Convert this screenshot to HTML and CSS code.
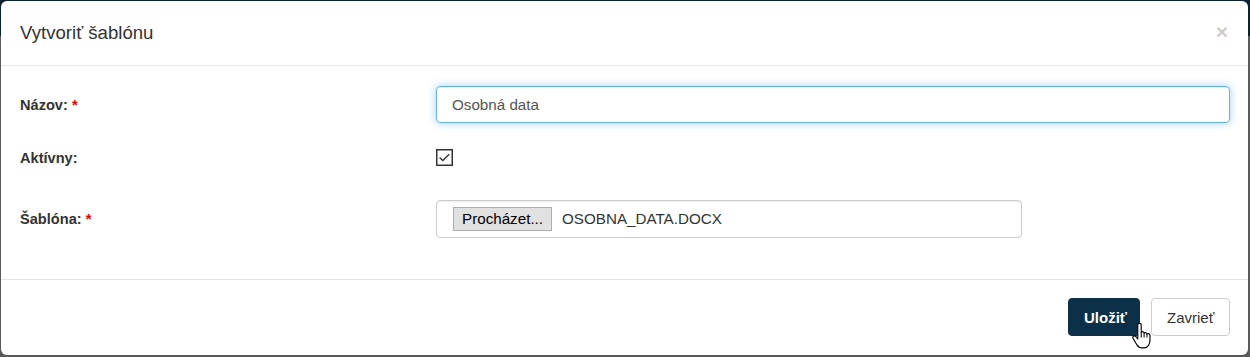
FILE: index.html
```html
<!DOCTYPE html>
<html lang="sk">
<head>
<meta charset="utf-8">
<title>Vytvoriť šablónu</title>
<link rel="stylesheet" href="styles.css">
</head>
<body>
<div class="modal">
  <div class="modal-header">
    <h4 class="modal-title">Vytvoriť šablónu</h4>
    <span class="close">×</span>
  </div>
  <div class="modal-body">
    <div class="row row-name">
      <label class="lbl">Názov: <span class="req">*</span></label>
      <div class="ctl"><div class="input focus">Osobná data</div></div>
    </div>
    <div class="row row-active">
      <label class="lbl">Aktívny:</label>
      <div class="ctl">
        <svg class="check" width="17" height="17" viewBox="0 0 17 17"><rect x="0.75" y="0.75" width="15.5" height="15.5" fill="#fff" stroke="#333" stroke-width="1.5"/><polyline points="3.6,8.6 6.8,11.6 13.2,5.2" fill="none" stroke="#333" stroke-width="1.4"/></svg>
      </div>
    </div>
    <div class="row row-file">
      <label class="lbl">Šablóna: <span class="req">*</span></label>
      <div class="ctl"><div class="input file"><span class="browse">Procházet...</span><span class="fname">OSOBNA_DATA.DOCX</span></div></div>
    </div>
  </div>
  <div class="modal-footer">
    <button class="btn btn-primary">Uložiť</button>
    <button class="btn btn-default">Zavrieť</button>
  </div>
  <svg class="cursor" width="19" height="26" viewBox="0 0 16.5 22.5"><path d="M5 1.6C5 .8 5.6.2 6.5.2S8 .8 8 1.6V8.2C8.3 7.6 9 7.4 9.6 7.6S10.5 8.3 10.5 8.9C10.8 8.4 11.5 8.2 12.1 8.4S13 9.1 13 9.7C13.3 9.3 14 9.1 14.6 9.3S15.6 10.1 15.6 10.7V15.2C15.6 18.4 13.6 21.6 10.5 21.6H8.6C6.6 21.6 5.3 20.6 4.3 19L1 13.4C.5 12.6.7 11.7 1.4 11.3S2.9 11.1 3.4 11.8L5 13.8Z" fill="#fff" stroke="#000" stroke-width="1" stroke-linejoin="round"/><path d="M8 8.2V12.5M10.5 8.9V12.5M13 9.7V12.5" fill="none" stroke="#000" stroke-width=".9"/></svg>
</div>
</body>
</html>
```
FILE: styles.css
```css
html, body {
  margin: 0;
  padding: 0;
}
body {
  width: 1250px;
  height: 357px;
  overflow: hidden;
  background: linear-gradient(#0b2233 0, #0b2233 36px, #5a5a5a 36px, #5a5a5a 100%);
  padding: 1px 2px 2px 1px;
  box-sizing: border-box;
  font-family: "Liberation Sans", Arial, sans-serif;
  color: #333;
}
.modal {
  position: relative;
  width: 1247px;
  height: 354px;
  background: #fff;
  border-radius: 6px;
  display: flex;
  flex-direction: column;
  overflow: hidden;
}
.modal-header {
  height: 65px;
  flex: none;
  box-sizing: border-box;
  border-bottom: 1px solid #e5e5e5;
  display: flex;
  align-items: center;
  justify-content: space-between;
  padding: 0 20px 0 19px;
}
.modal-title {
  margin: 0;
  font-size: 18.6px;
  font-weight: normal;
  line-height: 20px;
  color: #333;
}
.close {
  font-size: 21px;
  font-weight: bold;
  line-height: 1;
  color: #000;
  opacity: .2;
  margin-top: -4px;
}
.modal-body {
  height: 214px;
  flex: none;
  box-sizing: border-box;
  padding: 20px 18px 0 19px;
  border-bottom: 1px solid #e5e5e5;
}
.row {
  display: flex;
  align-items: center;
}
.lbl {
  width: 416px;
  flex: none;
  font-size: 14.6px;
  font-weight: bold;
  color: #333;
}
.req {
  color: #e10000;
}
.ctl {
  flex: 1;
  display: flex;
}
.row-name {
  height: 37px;
}
.row-active {
  margin-top: 26px;
  height: 17px;
}
.row-file {
  margin-top: 34px;
  height: 37px;
}
.input {
  box-sizing: border-box;
  height: 37px;
  border: 1px solid #ccc;
  border-radius: 4px;
  font-size: 15.2px;
  color: #555;
  display: flex;
  align-items: center;
  padding: 0 15px;
  box-shadow: inset 0 1px 1px rgba(0,0,0,.075);
}
.input.focus {
  width: 100%;
  border-color: #66afe9;
  box-shadow: inset 0 1px 1px rgba(0,0,0,.075), 0 0 8px rgba(102,175,233,.6);
}
.input.file {
  width: 586px;
  height: 38px;
  padding: 0 16px;
  color: #333;
}
.check {
  display: block;
}
.browse {
  box-sizing: border-box;
  height: 24px;
  padding: 0 8px;
  background: #e1e1e1;
  border: 1px solid #adadad;
  display: flex;
  align-items: center;
  color: #000;
  font-size: 15.2px;
}
.fname {
  margin-left: 10px;
  font-size: 15.2px;
  color: #333;
}
.modal-footer {
  flex: 1;
  display: flex;
  justify-content: flex-end;
  align-items: flex-start;
  padding: 18px 18px 0 0;
  gap: 11px;
}
.btn {
  height: 38px;
  box-sizing: border-box;
  border-radius: 4px;
  font-family: "Liberation Sans", Arial, sans-serif;
  font-size: 15px;
  padding: 0 15px;
  border: 1px solid #ccc;
  background: #fff;
  color: #333;
}
.btn-primary {
  background: #0b3048;
  border-color: #0b3048;
  color: #fff;
  font-weight: bold;
  width: 72px;
}
.btn-default {
  width: 79px;
}
.cursor {
  position: absolute;
  left: 1131px;
  top: 322px;
}
```
